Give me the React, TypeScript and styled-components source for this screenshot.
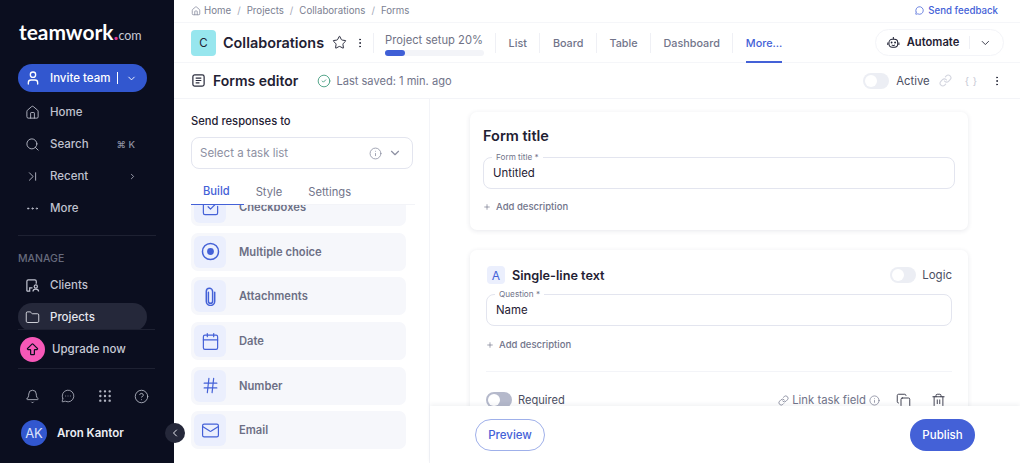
import { createGlobalStyle, styled } from 'styled-components';
import {
    ArrowBigUp,
    Bell,
    Calendar,
    CheckSquare,
    ChevronDown,
    ChevronLast,
    ChevronLeft,
    ChevronRight,
    CircleCheck,
    CircleHelp,
    Copy,
    Ellipsis,
    EllipsisVertical,
    Folder,
    Grip,
    Hash,
    House,
    Info,
    Link,
    Mail,
    MessageCircle,
    MessageCircleMore,
    Plus,
    Search,
    Star,
    Trash2,
    User,
} from 'lucide-react';

const GlobalStyle = createGlobalStyle`
    html, body {
        margin: 0;
        height: 100%;
        overflow: hidden;
        background: #fff;
    }
    body {
        font-family: Inter, "Liberation Sans", sans-serif;
        color: #1f2133;
    }
    * {
        box-sizing: border-box;
    }
`;

const Page = styled.div`
    display: flex;
    width: 1020px;
    height: 463px;
    overflow: hidden;
`;

/* sidebar */

const Sidebar = styled.aside`
    position: relative;
    flex: 0 0 174px;
    display: flex;
    flex-direction: column;
    background: #0b0e1f;
    color: #c8cad6;
`;

const SidebarScroll = styled.div`
    height: 329px;
    overflow: hidden;
    padding: 0 18px;
`;

const Logo = styled.div`
    display: flex;
    align-items: baseline;
    height: 64px;
    padding: 19px 0 0 1px;
    font-family: Lato, Inter, sans-serif;
    font-size: 20.9px;
    font-weight: 700;
    color: #fff;
    line-height: 26px;
`;

const LogoDot = styled.span`
    color: #e5399a;
`;

const LogoCom = styled.span`
    font-size: 12.5px;
    font-weight: 400;
    color: #c8cad6;
`;

const InviteButton = styled.div`
    display: flex;
    align-items: center;
    width: 129px;
    height: 28px;
    padding: 0 10px 0 7px;
    border-radius: 14px;
    background: #3257cf;
    color: #fff;
    font-size: 11.5px;
    font-weight: 500;
    margin-bottom: 6px;
`;

const InviteLabel = styled.span`
    margin-left: 9px;
    flex: 1;
`;

const InviteBar = styled.span`
    width: 1px;
    height: 12px;
    background: #fff;
    margin-right: 8px;
`;

const NavRow = styled.div<{ $active?: boolean }>`
    display: flex;
    align-items: center;
    width: 129px;
    height: 28px;
    margin-bottom: 4px;
    padding: 0 10px 0 7px;
    border-radius: 14px;
    font-size: 11.5px;
    font-weight: 500;
    background: ${(p) => (p.$active ? '#25283a' : 'transparent')};
    color: ${(p) => (p.$active ? '#e6e7ee' : '#c0c2cf')};
    svg {
        flex: none;
    }
`;

const NavLabel = styled.span`
    margin-left: 10px;
    flex: 1;
`;

const Shortcut = styled.span`
    font-size: 9.5px;
    color: #8f92a3;
    margin-right: 2px;
`;

const NavDivider = styled.div`
    height: 1px;
    background: #1e2132;
    margin: 13px 0 17px;
`;

const SectionLabel = styled.div`
    font-size: 10.5px;
    font-weight: 500;
    color: #666a7c;
    line-height: 12px;
    margin-bottom: 6px;
`;

const UpgradeRow = styled.div`
    display: flex;
    align-items: center;
    height: 38px;
    margin: 0 19px 0 20px;
    font-size: 11.5px;
    font-weight: 500;
    color: #c8cad6;
`;

const UpgradeCircle = styled.span`
    display: flex;
    align-items: center;
    justify-content: center;
    width: 25px;
    height: 25px;
    border-radius: 50%;
    background: #f758b8;
    color: #0b0e1f;
    margin-right: 7px;
`;

const SidebarRule = styled.div`
    flex: none;
    height: 1px;
    background: #1e2132;
    margin: 0 19px 0 18px;
`;

const ToolRow = styled.div`
    display: flex;
    align-items: center;
    justify-content: space-between;
    margin: 19px 25px 0 25px;
    height: 16px;
    color: #b4b7c4;
`;

const UserRow = styled.div`
    display: flex;
    align-items: center;
    margin: 16px 0 0 21px;
    font-size: 11.5px;
    font-weight: 600;
    color: #eceef4;
`;

const Avatar = styled.span`
    display: flex;
    align-items: center;
    justify-content: center;
    width: 26px;
    height: 26px;
    border-radius: 50%;
    background: #3257cf;
    color: #dfe5fa;
    font-size: 13px;
    font-weight: 400;
    margin-right: 10px;
`;

const CollapseButton = styled.span`
    position: absolute;
    right: -11px;
    top: 423px;
    display: flex;
    align-items: center;
    justify-content: center;
    width: 20px;
    height: 20px;
    border-radius: 50%;
    background: #25283a;
    color: #e6e7ee;
    z-index: 2;
`;

/* main area */

const Main = styled.main`
    flex: 1;
    min-width: 0;
    display: flex;
    flex-direction: column;
`;

const BreadcrumbBar = styled.div`
    display: flex;
    align-items: center;
    flex: 0 0 23px;
    padding: 0 22px 1px 17px;
    font-size: 9.7px;
    color: #7c7f92;
    border-bottom: 1px solid #f5f6f9;
`;

const Crumb = styled.span`
    margin-left: 3px;
`;

const CrumbSlash = styled.span`
    margin: 0 6px;
    color: #a4a7b6;
`;

const Feedback = styled.span`
    display: flex;
    align-items: center;
    gap: 4px;
    margin-left: auto;
    color: #4461d7;
    font-weight: 500;
`;

const ProjectBar = styled.div`
    display: flex;
    align-items: center;
    flex: 0 0 39px;
    padding: 0 16px 0 17px;
    border-bottom: 1px solid #f5f6f9;
`;

const ProjectTile = styled.span`
    display: flex;
    align-items: center;
    justify-content: center;
    width: 25px;
    height: 26px;
    border-radius: 4px;
    background: #97e6ee;
    font-size: 11.5px;
    margin-right: 7px;
`;

const ProjectName = styled.span`
    font-size: 14.4px;
    font-weight: 600;
    margin-right: 8px;
`;

const SetupBox = styled.div`
    width: 99px;
    margin: 0 11px 0 11px;
    padding-top: 4px;
`;

const SetupLabel = styled.div`
    font-size: 11.2px;
    line-height: 14px;
    color: #6f7285;
    white-space: nowrap;
    margin-bottom: 3px;
`;

const SetupTrack = styled.div`
    height: 6px;
    border-radius: 3px;
    background: #f3f4f8;
`;

const SetupFill = styled.div`
    height: 100%;
    border-radius: 3px;
    background: #3f5fd6;
`;

const VerticalRule = styled.span`
    width: 1px;
    height: 20px;
    background: #eff0f5;
`;

const ViewTab = styled.span<{ $active?: boolean }>`
    position: relative;
    display: flex;
    align-items: center;
    height: 39px;
    font-size: 10.8px;
    font-weight: 500;
    padding-top: 2px;
    margin: 0 12.5px;
    color: ${(p) => (p.$active ? '#4461d7' : '#71748a')};
    ${(p) =>
        p.$active &&
        `
        &::after {
            content: '';
            position: absolute;
            left: 0;
            right: 0;
            bottom: -1px;
            height: 2px;
            background: #4461d7;
        }
    `}
`;

const AutomateButton = styled.div`
    display: flex;
    align-items: center;
    width: 129px;
    height: 27px;
    margin-left: auto;
    padding: 0 11px 0 11px;
    border: 1px solid #f3f4f8;
    border-radius: 14px;
    font-size: 11.2px;
    font-weight: 600;
`;

const AutomateLabel = styled.span`
    margin-left: 7px;
    padding-right: 10px;
    border-right: 1px solid #eff0f5;
    line-height: 13px;
    margin-right: 9px;
`;

const EditorBar = styled.div`
    display: flex;
    align-items: center;
    flex: 0 0 36px;
    padding: 0 17px;
    border-bottom: 1px solid #f3f4f8;
`;

const EditorTitle = styled.span`
    font-size: 14px;
    font-weight: 600;
    margin: 0 19px 0 7px;
`;

const SavedText = styled.span`
    font-size: 11.1px;
    color: #71748a;
    margin-left: 5px;
`;

const ActiveGroup = styled.div`
    display: flex;
    align-items: center;
    margin-left: auto;
    font-size: 11.3px;
    color: #4b4e62;
`;

const ActiveLabel = styled.span`
    margin: 0 9px 0 7px;
`;

const Toggle = styled.span<{ $dark?: boolean }>`
    display: block;
    position: relative;
    flex: none;
    width: 26px;
    height: 16px;
    border-radius: 8px;
    background: ${(p) => (p.$dark ? '#b5b9cb' : '#eceef4')};
    &::before {
        content: '';
        position: absolute;
        left: 2px;
        top: 2px;
        width: 12px;
        height: 12px;
        border-radius: 50%;
        background: #fff;
    }
`;

const Braces = styled.span`
    font-size: 10px;
    color: #c6c8d4;
    margin: 0 14px 0 13px;
    word-spacing: 1px;
`;

const Workspace = styled.div`
    flex: 1;
    min-height: 0;
    display: flex;
`;

/* left panel */

const BuilderPanel = styled.section`
    flex: 0 0 256px;
    display: flex;
    flex-direction: column;
    border-right: 1px solid #f3f4f8;
    padding: 0 0 0 17px;
`;

const FieldHeading = styled.div`
    font-size: 11.2px;
    font-weight: 500;
    line-height: 15px;
    margin: 15px 0 8px;
`;

const SelectBox = styled.div`
    display: flex;
    align-items: center;
    gap: 6px;
    width: 222px;
    height: 32px;
    padding: 0 10px 0 8px;
    border: 1px solid #e3e5ef;
    border-radius: 8px;
    font-size: 11.5px;
    color: #8d90a2;
`;

const SelectText = styled.span`
    flex: 1;
`;

const BuilderTabs = styled.div`
    display: flex;
    height: 36px;
    width: 224px;
    border-bottom: 1px solid #f3f4f8;
    position: relative;
    z-index: 1;
    background: #fff;
`;

const BuilderTab = styled.span<{ $active?: boolean }>`
    display: flex;
    align-items: center;
    justify-content: center;
    padding: 9px 14px 0 12px;
    height: 36px;
    font-size: 11.2px;
    color: ${(p) => (p.$active ? '#4461d7' : '#71748a')};
    font-weight: ${(p) => (p.$active ? 500 : 400)};
    border-bottom: ${(p) => (p.$active ? '1px solid #4461d7' : '0')};
`;

const FieldTypeViewport = styled.div`
    flex: 1;
    min-height: 0;
    overflow: hidden;
`;

const FieldTypeList = styled.div`
    display: flex;
    flex-direction: column;
    gap: 6.7px;
    margin-top: -17px;
`;

const FieldType = styled.div`
    display: flex;
    align-items: center;
    flex: none;
    width: 215px;
    height: 38px;
    padding-left: 3px;
    border-radius: 7px;
    background: #f6f7fb;
    font-size: 11.2px;
    font-weight: 600;
    color: #6c6f85;
`;

const FieldIcon = styled.span`
    display: flex;
    align-items: center;
    justify-content: center;
    width: 32px;
    height: 32px;
    border-radius: 6px;
    background: #ebeffd;
    color: #4461d7;
    margin-right: 13px;
`;

/* right panel */

const CanvasPanel = styled.section`
    flex: 1;
    min-width: 0;
    display: flex;
    flex-direction: column;
    position: relative;
`;

const CanvasScroll = styled.div`
    flex: 1;
    min-height: 0;
    overflow: hidden;
    padding: 13px 0 0 40px;
`;

const Card = styled.div`
    width: 498px;
    border-radius: 7px;
    background: #fff;
    box-shadow: 0 1px 5px rgba(40, 44, 80, 0.11);
`;

const TitleCard = styled(Card)`
    height: 118px;
    padding: 15px 13px 0 13px;
    margin-bottom: 20px;
`;

const QuestionCard = styled(Card)`
    height: 200px;
    padding: 16px 16px 0 16px;
`;

const CardTitle = styled.div`
    font-size: 14.5px;
    font-weight: 600;
    line-height: 18px;
    margin-bottom: 12px;
`;

const OutlinedField = styled.div`
    position: relative;
    display: flex;
    align-items: center;
    height: 32px;
    padding: 0 9px 1px;
    border: 1px solid #e3e5ef;
    border-radius: 8px;
    font-size: 11.4px;
`;

const FloatingLabel = styled.span`
    position: absolute;
    left: 8px;
    top: -6px;
    padding: 0 4px;
    background: #fff;
    font-size: 8.2px;
    line-height: 11px;
    color: #71748a;
`;

const AddDescription = styled.div<{ $top: number }>`
    display: flex;
    align-items: center;
    gap: 5px;
    margin-top: ${(p) => p.$top}px;
    font-size: 9.5px;
    font-weight: 500;
    line-height: 12px;
    color: #71748a;
`;

const QuestionHead = styled.div`
    display: flex;
    align-items: center;
    height: 18px;
    margin-bottom: 10px;
    font-size: 12.7px;
    font-weight: 600;
`;

const TypeTile = styled.span`
    display: flex;
    align-items: center;
    justify-content: center;
    width: 18px;
    height: 18px;
    border-radius: 4px;
    background: #ebeffd;
    color: #4461d7;
    font-size: 12px;
    font-weight: 400;
    margin: 0 7px 0 1px;
`;

const LogicGroup = styled.div`
    display: flex;
    align-items: center;
    gap: 6px;
    margin-left: auto;
    font-size: 11.5px;
    font-weight: 400;
    color: #4b4e62;
`;

const CardRule = styled.div`
    height: 1px;
    background: #f3f4f8;
    margin: 20px 0;
`;

const FooterRow = styled.div`
    display: flex;
    align-items: center;
    padding-right: 6px;
    font-size: 11.1px;
    color: #4b4e62;
`;

const RequiredLabel = styled.span`
    margin-left: 6px;
`;

const LinkField = styled.span`
    display: flex;
    align-items: center;
    gap: 3px;
    margin-left: auto;
    margin-right: 16px;
    font-size: 11.3px;
    color: #71748a;
`;

const CardActions = styled.span`
    display: flex;
    align-items: center;
    gap: 20px;
    color: #2a2c3d;
`;

const BottomBar = styled.div`
    flex: 0 0 57px;
    display: flex;
    align-items: center;
    justify-content: space-between;
    padding: 1px 45px 0 45px;
    background: #fff;
    box-shadow: 0 -2px 4px rgba(40, 44, 80, 0.06);
    position: relative;
`;

const PreviewButton = styled.button`
    width: 70px;
    height: 32px;
    border: 1px solid #9fb0ea;
    border-radius: 16px;
    background: #fff;
    color: #4461d7;
    font: 500 11.5px Inter, sans-serif;
`;

const PublishButton = styled.button`
    width: 65px;
    height: 32px;
    border: 0;
    border-radius: 16px;
    background: #4461d7;
    color: #fff;
    font: 500 11.5px Inter, sans-serif;
`;

const IconGap = styled.span`
    display: flex;
    margin: 0 7px 0 7px;
    color: #2a2c3d;
`;

const ClientsIcon = () => (
    <svg width="15" height="15" viewBox="0 0 16 16" fill="none" stroke="currentColor" strokeWidth="1.3">
        <path d="M2 14V3.5A1.5 1.5 0 0 1 3.5 2h7A1.5 1.5 0 0 1 12 3.5V6" />
        <path d="M2 14h3v-3.5h3" />
        <circle cx="11.5" cy="9" r="1.7" />
        <path d="M8.5 14.5c0-3.4 6-3.4 6 0" />
    </svg>
);

const FormIcon = () => (
    <svg width="15" height="15" viewBox="0 0 16 16" fill="none" stroke="#2a2c3d" strokeWidth="1.3">
        <rect x="2" y="2" width="12" height="12" rx="2" />
        <path d="M5 5.5h6M5 8h6M5 10.5h4" />
    </svg>
);

const RobotIcon = () => (
    <svg width="16" height="17" viewBox="0 0 16 17" fill="none" stroke="#1f2133" strokeWidth="1.3">
        <path d="M8 1.5v2.5" />
        <rect x="2.5" y="4.5" width="11" height="10" rx="4" />
        <path d="M1 8.5v3M15 8.5v3" />
        <path d="M6 11.5c1 .8 3 .8 4 0" />
        <circle cx="5.8" cy="8.5" r=".5" fill="#1f2133" />
        <circle cx="10.2" cy="8.5" r=".5" fill="#1f2133" />
    </svg>
);

const ChoiceIcon = ({ size }: { size: number }) => (
    <svg width={size} height={size} viewBox="0 0 18 18" fill="none" stroke="currentColor" strokeWidth="1.4">
        <circle cx="9" cy="9" r="7.6" />
        <circle cx="9" cy="9" r="3.2" fill="currentColor" stroke="none" />
    </svg>
);

const ClipIcon = ({ size }: { size: number }) => (
    <svg width={size} height={size} viewBox="0 0 18 18" fill="none" stroke="currentColor" strokeWidth="1.4" strokeLinecap="round">
        <path d="M7 5v8.5a2 2 0 0 0 4 0V4.2a3 3 0 0 0-6 0v9.3a4 4 0 0 0 8 0V5" />
    </svg>
);

const fieldTypes = [
    { label: 'Checkboxes', icon: CheckSquare },
    { label: 'Multiple choice', icon: ChoiceIcon },
    { label: 'Attachments', icon: ClipIcon },
    { label: 'Date', icon: Calendar },
    { label: 'Number', icon: Hash },
    { label: 'Email', icon: Mail },
];

export default function App() {
    return (
        <Page>
            <GlobalStyle />
            <Sidebar>
                <SidebarScroll>
                    <Logo>
                        teamwork<LogoDot>.</LogoDot>
                        <LogoCom>com</LogoCom>
                    </Logo>
                    <InviteButton>
                        <User size={16} />
                        <InviteLabel>Invite team</InviteLabel>
                        <InviteBar />
                        <ChevronDown size={11} />
                    </InviteButton>
                    <NavRow>
                        <House size={15} strokeWidth={1.4} />
                        <NavLabel>Home</NavLabel>
                    </NavRow>
                    <NavRow>
                        <Search size={15} strokeWidth={1.4} />
                        <NavLabel>Search</NavLabel>
                        <Shortcut>⌘ K</Shortcut>
                    </NavRow>
                    <NavRow>
                        <ChevronLast size={15} strokeWidth={1.4} />
                        <NavLabel>Recent</NavLabel>
                        <ChevronRight size={9} />
                    </NavRow>
                    <NavRow>
                        <Ellipsis size={15} strokeWidth={1.6} />
                        <NavLabel>More</NavLabel>
                    </NavRow>
                    <NavDivider />
                    <SectionLabel>MANAGE</SectionLabel>
                    <NavRow>
                        <ClientsIcon />
                        <NavLabel>Clients</NavLabel>
                    </NavRow>
                    <NavRow $active>
                        <Folder size={15} strokeWidth={1.4} />
                        <NavLabel>Projects</NavLabel>
                    </NavRow>
                </SidebarScroll>
                <SidebarRule />
                <UpgradeRow>
                    <UpgradeCircle>
                        <ArrowBigUp size={15} strokeWidth={2} />
                    </UpgradeCircle>
                    Upgrade now
                </UpgradeRow>
                <SidebarRule />
                <ToolRow>
                    <Bell size={15} strokeWidth={1.4} />
                    <MessageCircleMore size={14} strokeWidth={1.4} />
                    <Grip size={16} strokeWidth={1.6} />
                    <CircleHelp size={15} strokeWidth={1.4} />
                </ToolRow>
                <UserRow>
                    <Avatar>AK</Avatar>
                    Aron Kantor
                </UserRow>
                <CollapseButton>
                    <ChevronLeft size={12} />
                </CollapseButton>
            </Sidebar>
            <Main>
                <BreadcrumbBar>
                    <House size={10} color="#8d90a2" />
                    <Crumb>Home</Crumb>
                    <CrumbSlash>/</CrumbSlash>
                    Projects
                    <CrumbSlash>/</CrumbSlash>
                    Collaborations
                    <CrumbSlash>/</CrumbSlash>
                    Forms
                    <Feedback>
                        <MessageCircle size={9} />
                        Send feedback
                    </Feedback>
                </BreadcrumbBar>
                <ProjectBar>
                    <ProjectTile>C</ProjectTile>
                    <ProjectName>Collaborations</ProjectName>
                    <Star size={15} strokeWidth={1.5} />
                    <IconGap>
                        <EllipsisVertical size={12} />
                    </IconGap>
                    <VerticalRule />
                    <SetupBox>
                        <SetupLabel>Project setup 20%</SetupLabel>
                        <SetupTrack>
                            <SetupFill style={{ width: '20%' }} />
                        </SetupTrack>
                    </SetupBox>
                    <VerticalRule />
                    <ViewTab>List</ViewTab>
                    <VerticalRule />
                    <ViewTab>Board</ViewTab>
                    <VerticalRule />
                    <ViewTab>Table</ViewTab>
                    <VerticalRule />
                    <ViewTab>Dashboard</ViewTab>
                    <VerticalRule />
                    <ViewTab $active>More...</ViewTab>
                    <AutomateButton>
                        <RobotIcon />
                        <AutomateLabel>Automate</AutomateLabel>
                        <ChevronDown size={16} strokeWidth={1.6} color="#1f2133" />
                    </AutomateButton>
                </ProjectBar>
                <EditorBar>
                    <FormIcon />
                    <EditorTitle>Forms editor</EditorTitle>
                    <CircleCheck size={14} color="#3f9a7c" strokeWidth={1.5} />
                    <SavedText>Last saved: 1 min. ago</SavedText>
                    <ActiveGroup>
                        <Toggle />
                        <ActiveLabel>Active</ActiveLabel>
                        <Link size={13} color="#d3d5df" />
                        <Braces>{'{ }'}</Braces>
                        <EllipsisVertical size={12} color="#2a2c3d" />
                    </ActiveGroup>
                </EditorBar>
                <Workspace>
                    <BuilderPanel>
                        <FieldHeading>Send responses to</FieldHeading>
                        <SelectBox>
                            <SelectText>Select a task list</SelectText>
                            <Info size={13} color="#8d90a2" strokeWidth={1.5} />
                            <ChevronDown size={14} color="#8d90a2" />
                        </SelectBox>
                        <BuilderTabs>
                            <BuilderTab $active>Build</BuilderTab>
                            <BuilderTab>Style</BuilderTab>
                            <BuilderTab>Settings</BuilderTab>
                        </BuilderTabs>
                        <FieldTypeViewport>
                            <FieldTypeList>
                                {fieldTypes.map((field) => (
                                    <FieldType key={field.label}>
                                        <FieldIcon>
                                            <field.icon size={19} strokeWidth={1.5} />
                                        </FieldIcon>
                                        {field.label}
                                    </FieldType>
                                ))}
                            </FieldTypeList>
                        </FieldTypeViewport>
                    </BuilderPanel>
                    <CanvasPanel>
                        <CanvasScroll>
                            <TitleCard>
                                <CardTitle>Form title</CardTitle>
                                <OutlinedField>
                                    <FloatingLabel>Form title *</FloatingLabel>
                                    Untitled
                                </OutlinedField>
                                <AddDescription $top={12}>
                                    <Plus size={8} />
                                    Add description
                                </AddDescription>
                            </TitleCard>
                            <QuestionCard>
                                <QuestionHead>
                                    <TypeTile>A</TypeTile>
                                    Single-line text
                                    <LogicGroup>
                                        <Toggle />
                                        Logic
                                    </LogicGroup>
                                </QuestionHead>
                                <OutlinedField>
                                    <FloatingLabel>Question *</FloatingLabel>
                                    Name
                                </OutlinedField>
                                <AddDescription $top={13}>
                                    <Plus size={8} />
                                    Add description
                                </AddDescription>
                                <CardRule />
                                <FooterRow>
                                    <Toggle $dark />
                                    <RequiredLabel>Required</RequiredLabel>
                                    <LinkField>
                                        <Link size={11} color="#8d90a2" />
                                        Link task field
                                        <Info size={11} strokeWidth={1.5} />
                                    </LinkField>
                                    <CardActions>
                                        <Copy size={15} strokeWidth={1.4} />
                                        <Trash2 size={15} strokeWidth={1.4} />
                                    </CardActions>
                                </FooterRow>
                            </QuestionCard>
                        </CanvasScroll>
                        <BottomBar>
                            <PreviewButton>Preview</PreviewButton>
                            <PublishButton>Publish</PublishButton>
                        </BottomBar>
                    </CanvasPanel>
                </Workspace>
            </Main>
        </Page>
    );
}
